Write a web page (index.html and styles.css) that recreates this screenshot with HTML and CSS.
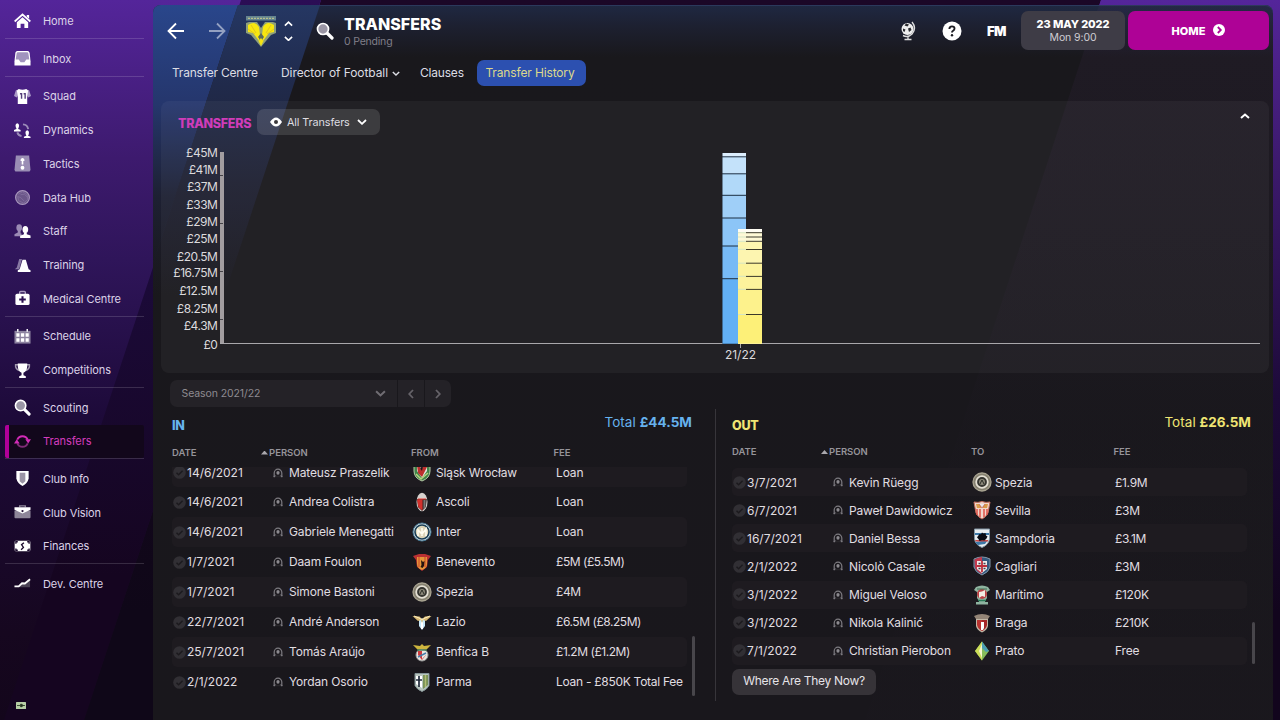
FILE: index.html
```html
<!DOCTYPE html>
<html lang="en">
<head>
<meta charset="utf-8">
<title>Transfers</title>
<link rel="stylesheet" href="styles.css">
</head>
<body>
<svg class="defs" width="0" height="0">
  <symbol id="tick" viewBox="0 0 13 13"><circle cx="6.5" cy="6.5" r="6.3" fill="#312f34"/><path d="M3.5 6.8l2.1 2 4-4" fill="none" stroke="#1c1a1e" stroke-width="1.5"/></symbol>
  <symbol id="person" viewBox="0 0 10 10"><path d="M1.200 9V5a3.800 3.800 0 0 1 7.600 0v4" fill="none" stroke="#7d7b80" stroke-width="1.200"/><ellipse cx="5" cy="4.800" rx="1.600" ry="1.900" fill="#8b898e"/><path d="M.8 9.300l2.700-1.800L5 8l1.500-.5 2.700 1.800z" fill="#28262a"/><path d="M.6 9.300V8l2.400-.8L1.800 9.300zM9.400 9.300V8L7 7.200l1.200 2.100z" fill="#7d7b80"/></symbol>
  <symbol id="glass" viewBox="0 0 18 18"><path d="M11 11l5 5" stroke="#fff" stroke-width="3.200" stroke-linecap="round"/><circle cx="7" cy="7" r="5.500" fill="#9a96a5" stroke="#fff" stroke-width="1.700"/></symbol>
  <symbol id="down" viewBox="0 0 10 6"><path d="M1 1l4 3.800L9 1" fill="none" stroke="currentColor" stroke-width="1.800"/></symbol>
  <symbol id="slask" viewBox="0 0 20 20"><path d="M2 2q8-2 16 0v7q0 7-8 10-8-3-8-10z" fill="#3f8549" stroke="#b8c9a6"/><path d="M5 3h10v6l-5 7-5-7z" fill="#e8e3df"/><path d="M5 3h4l-1 4 4-3 3 1-5 10-4-4z" fill="#bc302d"/><path d="M8 6l3-2-1 5z" fill="#181617"/><path d="M4 12l5 5 7-6" stroke="#b7d37c" stroke-width="1.500" fill="none"/></symbol>
  <symbol id="ascoli" viewBox="0 0 20 20"><ellipse cx="10" cy="10" rx="5.500" ry="9.200" fill="#d6d2ce"/><path d="M5.200 7h9.600l-1 8-3.800 4-4-4z" fill="#3c2422"/><path d="M5 7.500h5.500V18.500l-4-3z" fill="#d2312c"/><path d="M11.500 8h2v7l-2 2z" fill="#777"/><path d="M6 7h8" stroke="#e83d35"/></symbol>
  <symbol id="inter" viewBox="0 0 20 20"><circle cx="10" cy="10" r="9" fill="#dce5e6" stroke="#487b98"/><circle cx="10" cy="10" r="7" fill="#ddd5b8" stroke="#183e57" stroke-width="1.600"/><path d="M6 14V8l4 4 4-5v7M10 6v8" stroke="#fffdf0" stroke-width="1.600" fill="none"/></symbol>
  <symbol id="benevento" viewBox="0 0 20 20"><path d="M1 4l6-2h6l6 2-3 4-1 7-5 4-5-4-1-7z" fill="#ba3032"/><path d="M5 5h10v7q0 4-5 6-5-2-5-6z" fill="#e4963a"/><path d="M7 5v10M13 5v10" stroke="#d0512c" stroke-width="1.200"/><path d="M9 8l2 2 1.500-1-.5 5-1.500 2-2-1 1-2z" fill="#24130f"/></symbol>
  <symbol id="spezia" viewBox="0 0 20 20"><circle cx="10" cy="10" r="9" fill="#858070" stroke="#a9a491" stroke-width="1.300"/><circle cx="10" cy="10" r="5.800" fill="#34342f" stroke="#e4e0d4" stroke-width="1.800"/><circle cx="10" cy="10" r="3" fill="#8c897b"/><path d="M8 12l2-4 2 4" stroke="#292b25" fill="none"/></symbol>
  <symbol id="lazio" viewBox="0 0 20 20"><path d="M7 8l3-2 3 2v6l-3 4-3-4z" fill="#c8e8f7"/><path d="M10 10v7" stroke="#fff" stroke-width="2"/><path d="M.5 4l7 .5L10 7l3-2.500L19.500 4 14 9l-3-1-1 3-1-3-3 1z" fill="#d7b873"/><path d="M2 4l5 2 3 2 3-2 5-2" stroke="#fff0c0" fill="none"/></symbol>
  <symbol id="benfica" viewBox="0 0 20 20"><circle cx="10" cy="13" r="6" fill="#e6e5de" stroke="#999"/><path d="M6 9h8v4l-4 5-4-5z" fill="#ce3a3c"/><path d="M10 9h4v4l-4 4z" fill="#ece9e2"/><path d="M6 15l8-4" stroke="#477caa" stroke-width="1.500"/><path d="M1 3l7 1 2-2 2 2 7-1-5 5-4-1-4 1z" fill="#cfb63e"/><path d="M5 8h10" stroke="#3f7850" stroke-width="1.400"/></symbol>
  <symbol id="parma" viewBox="0 0 20 20"><path d="M3 1.500h14v12q-2 4-7 6-5-2-7-6z" fill="#b7c4bd" stroke="#849496"/><path d="M11 3h5v10l-5 4z" fill="#799157"/><path d="M13.500 3v12" stroke="#b1bd73" stroke-width="1.400"/><path d="M4 4h6v12l-6-4z" fill="#fff"/><path d="M7 4v11M4 8h6" stroke="#202b3b" stroke-width="1.700"/></symbol>
  <symbol id="sevilla" viewBox="0 0 20 20"><path d="M2 2q4 1 8-.5Q14 3 18 2l-2 11q-2 4-6 6-4-2-6-6z" fill="#f1d5cb" stroke="#c46d5c"/><path d="M5 9v6M8 9v8M12 9v8M15 9v6" stroke="#dd5147" stroke-width="1.500"/><path d="M4 4h5v4H5zM11 4h5l-1 4h-4z" fill="#d99b4a"/><path d="M7 4l3 4 3-4" fill="#e8e8ec" stroke="#b83d3c" stroke-width=".6"/></symbol>
  <symbol id="sampdoria" viewBox="0 0 20 20"><path d="M2.500 1h15v10q-1 6-7.500 8.500Q3.500 17 2.500 11z" fill="#e8edf0" stroke="#8296a4"/><path d="M3 5h14v2H3zM3 14l13-2-3 4-7 1z" fill="#3c78a8"/><path d="M3 12h13v1.500H4z" fill="#c84848"/><path d="M10 4.500l1.500 1 2-.5.5 2.500 1.500 1-1 2-2 2-2.500-.3-2.500.8-1-2L5 9.500l1-1.500 1.500-2 1.500.3z" fill="#080b13"/></symbol>
  <symbol id="cagliari" viewBox="0 0 20 20"><path d="M2 3q8-4 16 0v8q-1 5-8 8-7-3-8-8z" fill="#34597e" stroke="#8397a9"/><path d="M2.500 3.500Q7 1 10 1v17q-6-3-7-7z" fill="#c23a4e"/><path d="M5 5h10v8l-5 4-5-4z" fill="#f0e9e7"/><path d="M10 5v11M5 10h10" stroke="#bd2f3c" stroke-width="1.800"/><path d="M6.500 7.500h2M11.500 7.500h2M6.500 12.500h2M11.500 12.500h2" stroke="#424151" stroke-width="1.500"/></symbol>
  <symbol id="maritimo" viewBox="0 0 20 20"><path d="M4 2q6-3 12 0l2 3-3 2v6l-2 3v1h3v2.500H4V17h3v-1l-2-3V7L2 5z" fill="#8fb4a0"/><circle cx="10" cy="9" r="5" fill="#bd4246"/><path d="M7 7q3 0 6-2v7l-3-1-3 2z" fill="#f3ece3"/><path d="M6 15.500h8" stroke="#2b7b57" stroke-width="1.500"/><path d="M5 4h10" stroke="#3d6c51"/></symbol>
  <symbol id="braga" viewBox="0 0 20 20"><path d="M2 3q8-4 16 0l-2 3H4z" fill="#948577"/><path d="M4 6h12v7q-1 4-6 6.500Q5 17 4 13z" fill="#c2b7a6"/><path d="M5 7h5v11q-4-2-5-6z" fill="#b93331"/><path d="M10 7h5v5q-1 4-5 6z" fill="#a52628"/><path d="M9 9h3v6l-1 2H9z" fill="#fff"/></symbol>
  <symbol id="prato" viewBox="0 0 20 20"><path d="M10 .5L17 10l-7 9.500L3 10z" fill="#86bd5a"/><path d="M10 .5v19L3 10z" fill="#cddd58"/><path d="M10 .5L17 10l-3 1-4-4z" fill="#4b9eb3"/><path d="M10 3l-3 7 3 7z" fill="#f7f6cf"/></symbol>
</svg>

<div class="backdrop"><i class="ray ray-dark"></i><i class="ray ray-mid"></i><i class="ray ray-right"></i></div>

<div class="app">
  <nav class="sidebar">
    <a class="item"><svg viewBox="0 0 18 18"><path d="M.7 9L9 1.600 17.300 9" fill="none" stroke="#fff" stroke-width="1.800"/><path d="M13.500 2H16v4l-2.500-2z" fill="#fff"/><path d="M9 4.500l6 5.300V16h-4v-4.500H7V16H3V9.800z" fill="#fff"/></svg>Home</a>
    <hr>
    <a class="item"><svg viewBox="0 0 18 18"><path d="M3.500 1h11q1.500 0 2 2l1 9v4.500H.5V12l1-9q.500-2 2-2" fill="#fff"/><path d="M4 2.500h10q1 0 1.200 1l1 6.500H13l-2 3H7l-2-3H1.800l1-6.500q.200-1 1.200-1" fill="#a193be"/></svg>Inbox</a>
    <hr>
    <a class="item"><svg viewBox="0 0 18 18"><path d="M5 1.500l-3 1L0 8.500l3 1.500 2-3zM13 1.500l3 1 2 6-3 1.500-2-3z" fill="#ab9ac7"/><path d="M5 1q4 1.500 8 0l2 2-1 5v9H4V8L3 3z" fill="#fff"/><path d="M6.300 6H8v5.500M10.200 6h1.600v5.500" fill="none" stroke="#56407c" stroke-width="1.500"/></svg>Squad</a>
    <a class="item"><svg viewBox="0 0 18 18"><path d="M9.500 2.500a6 6 0 0 1 5.500 5M8 15a6 6 0 0 1-4.500-4" fill="none" stroke="#9b8bb8" stroke-width="2"/><ellipse cx="3.500" cy="4" rx="1.900" ry="2.700" fill="#fff"/><path d="M2.500 6h2v1.500l2.500 1V10H0V8.500l2.500-1zM13 13h2v1.500l2.500 1V17h-7v-1.500l2.500-1z" fill="#fff"/><ellipse cx="14" cy="11.500" rx="1.900" ry="2.700" fill="#fff"/></svg>Dynamics</a>
    <a class="item"><svg viewBox="0 0 18 18"><path d="M2 .5h14l1.500 15.500-1 1.500H1.500L.5 16z" fill="#9a8db4"/><path d="M9 4v6M7 5.500h4" stroke="#fff" stroke-width="1.700"/><circle cx="9" cy="4.800" r="1.700" fill="#fff"/><circle cx="9" cy="13.500" r="2" fill="#fff"/></svg>Tactics</a>
    <a class="item"><svg viewBox="0 0 18 18"><circle cx="9" cy="9" r="7.300" fill="#6b5689" stroke="#a997bd" stroke-width="1.200"/><path d="M4.500 5.500L9 3l5 3 .500 5-4 4-5.500-2.500-1-4.500 3 1 4 4M7 6l4-.500 3 3" fill="none" stroke="#8471a0" stroke-width=".8"/></svg>Data Hub</a>
    <a class="item"><svg viewBox="0 0 18 18"><ellipse cx="5.500" cy="5" rx="3" ry="3.700" fill="#9b8bb5"/><path d="M4 8h3v3H8v3H.5v-2L4 10z" fill="#9b8bb5"/><ellipse cx="12" cy="7" rx="3" ry="3.800" fill="#fff"/><path d="M10.500 10h3v2l4 1.300V16h-11v-2.500l4-1.500z" fill="#fff"/></svg>Staff</a>
    <a class="item"><svg viewBox="0 0 18 18"><path d="M5.500 2h3l-3 11H.8L3 11z" fill="#8778a3"/><path d="M9 3h3.500l3 10 2 1v2H4v-2l2-1z" fill="#fff"/></svg>Training</a>
    <a class="item"><svg viewBox="0 0 18 18"><rect x="6" y="1.500" width="6" height="5" rx="1" fill="none" stroke="#a99bc0" stroke-width="1.500"/><rect x="1.500" y="4" width="15" height="12" rx="1.700" fill="#fff"/><path d="M9 6.500v7M5.500 10h7" stroke="#2c1152" stroke-width="2.200"/></svg>Medical Centre</a>
    <hr>
    <a class="item"><svg viewBox="0 0 18 18"><path d="M.5 3h17v13.500H.5z" fill="#8d83a0"/><path d="M4 1v3M14 1v3" stroke="#fff" stroke-width="1.500"/><path d="M2.500 5.500h3.300v3.800H2.500zM7.300 5.500h3.500v3.800H7.300zM12.300 5.500h3.300v3.800h-3.300zM2.500 10.800h3.300v3.800H2.500zM7.300 10.800h3.500v3.800H7.300zM12.300 10.800h3.300v3.800h-3.300z" fill="#fff"/></svg>Schedule</a>
    <a class="item"><svg viewBox="0 0 18 18"><path d="M4.500 3H1.700q-.5 4.500 4 6M13.500 3h2.800q.5 4.500-4 6" fill="none" stroke="#a39aaf" stroke-width="1.600"/><path d="M4 1.500h10v3q0 5-4 7v2.500l2.500 1V17h-7v-2L8 14v-2.500q-4-2-4-7z" fill="#fff"/></svg>Competitions</a>
    <hr>
    <a class="item"><svg><use href="#glass"/></svg>Scouting</a>
    <a class="item active"><svg viewBox="0 0 18 18"><path d="M3.500 7a6 6 0 0 1 11 0" fill="none" stroke="#d32bb8" stroke-width="2"/><path d="M14.500 11a6 6 0 0 1-11 0" fill="none" stroke="#7f2b77" stroke-width="2"/><path d="M12 6.500h6L15 11zM0 11l3-4.500L6 11z" fill="#d32bb8"/></svg>Transfers</a>
    <hr>
    <a class="item"><svg viewBox="0 0 18 18"><path d="M2.500 1h13v8q-1 5-6.500 8-5.500-3-6.500-8z" fill="#fff"/><path d="M6 3h6v9l-3 2.500L6 12z" fill="#9b94a5"/></svg>Club Info</a>
    <a class="item"><svg viewBox="0 0 18 18"><path d="M.5 7h17v7q0 1-1 1h-15q-1 0-1-1z" fill="#8e8699"/><path d="M6 3.500V2h6v1.500" fill="none" stroke="#8e8699" stroke-width="1.500"/><path d="M.5 3.500h17v2.700L9 10 .500 6.200z" fill="#fff"/><circle cx="9" cy="7.500" r="1.200" fill="#28153b"/></svg>Club Vision</a>
    <a class="item"><svg viewBox="0 0 18 18"><rect x=".7" y="3" width="16.600" height="11" rx="1.300" fill="#fff"/><path d="M2 6v-2h2M14 4h2v2M2 11v2h2M14 13h2v-2M10.500 5L8 7l2 3-2.500 2.500" fill="none" stroke="#1b0a2d" stroke-width="1.400"/></svg>Finances</a>
    <hr>
    <a class="item"><svg viewBox="0 0 18 18"><path d="M3 12h3l3-3 3 .500L17 5v8H7z" fill="#4a4254"/><path d="M.5 12H5l3.500-3.200 3 .2L17 4.500" fill="none" stroke="#fff" stroke-width="2"/></svg>Dev. Centre</a>
    <svg class="plug" viewBox="0 0 10 7"><rect width="10" height="7" rx=".5" fill="#b7cfa5"/><path d="M1 3.500h3M4.500 2.300H6l1.200 1.200L6 4.700H4.500zM7 3.500h2" fill="#25331e" stroke="#25331e" stroke-width=".8"/></svg>
  </nav>

  <main class="panel">
    <i class="shine shine-a"></i><i class="shine shine-b"></i><i class="shine shine-c"></i>
    <header class="topbar">
      <svg class="arrow" viewBox="0 0 18 18"><path d="M17 9H2M9 1.500L1.500 9 9 16.500" fill="none" stroke="#fff" stroke-width="1.800"/></svg>
      <svg class="arrow next" viewBox="0 0 18 18"><path d="M1 9h15M9 1.500L16.500 9 9 16.500" fill="none" stroke="#fff" stroke-width="1.800"/></svg>
      <svg class="club" viewBox="0 0 30 31"><path d="M0 0h30v4.500H0z" fill="#66858f"/><path d="M2 2.300h26" stroke="#b9c08b" stroke-width="1.300" stroke-dasharray="2 1"/><path d="M0 7l3-1 8 0 4 6 4-6 8 0 3 1v10l-5 2-10 12L5 19l-5-2z" fill="#8fa07a"/><path d="M2 9q7-5 11 2l1 8-1 6-6-8-5-1zM28 9q-7-5-11 2l-1 8 1 6 6-8 5-1z" fill="#f7e70f"/><path d="M2 13l7 5M28 13l-7 5M5 9l5 8M25 9l-5 8" stroke="#d8b528" stroke-width=".7"/><path d="M15 17l3 4-3 4-3-4z" fill="#5b6a5c"/><path d="M12.500 25l2.500-3 2.500 3-2.500 5z" fill="#f4e313"/></svg>
      <div class="spin"><svg viewBox="0 0 10 6"><path d="M1 5l4-3.800L9 5" fill="none" stroke="#fff" stroke-width="1.800"/></svg><svg viewBox="0 0 10 6"><path d="M1 1l4 3.800L9 1" fill="none" stroke="#fff" stroke-width="1.800"/></svg></div>
      <svg class="find"><use href="#glass"/></svg>
      <div class="title"><h1>TRANSFERS</h1><p>0 Pending</p></div>
      <svg class="globe" viewBox="0 0 18 20"><circle cx="8.500" cy="8" r="6" fill="#eee"/><path d="M13 1q5 6 0 12-4 4-9 1.500M9 15v3M5.500 18.500h7" fill="none" stroke="#ddd" stroke-width="1.400"/><path d="M7 2.500l3 1-1.500 2-3-1zM4 7.500l2.500 1-1 2.500-1.500-1zM9 7.500l2.500-1 1 2.500-2.500 2z" fill="#2a2b30"/></svg>
      <svg class="help" viewBox="0 0 20 20"><circle cx="10" cy="10" r="9.500" fill="#fff"/><path d="M7.400 8q0-2.600 2.600-2.600t2.500 2.200q0 1.300-1.400 2.100-1.100.6-1.100 1.900" fill="none" stroke="#1b1b22" stroke-width="1.900"/><circle cx="10" cy="14.200" r="1.200" fill="#1b1b22"/></svg>
      <b class="fm">FM</b>
      <div class="date"><b>23 MAY 2022</b><span>Mon 9:00</span></div>
      <div class="home"><b>HOME</b><svg viewBox="0 0 12 12"><circle cx="6" cy="6" r="6" fill="#fff"/><path d="M4.800 3l3 3-3 3" fill="none" stroke="#ae0296" stroke-width="1.800"/></svg></div>
    </header>

    <nav class="tabs">
      <a class="t1">Transfer Centre</a><a class="t2">Director of Football<svg><use href="#down"/></svg></a><a class="t3">Clauses</a><a class="t4">Transfer History</a>
    </nav>

    <section class="card">
      <div class="card-head"><h2>TRANSFERS</h2><div class="filter"><svg class="eye" viewBox="0 0 12 10"><path d="M0 5q6-9 12 0-6 9-12 0" fill="#fff"/><circle cx="6" cy="5" r="2" fill="#3b393d"/></svg><span>All Transfers</span><svg class="chev"><use href="#down"/></svg></div><svg class="collapse" viewBox="0 0 10 6"><path d="M1 5l4-3.500L9 5" fill="none" stroke="#fff" stroke-width="2"/></svg></div>
      <svg class="chart" viewBox="161 136 1108 237">
        <g class="ylab" text-anchor="end"><text x="217.500" y="157">£45M</text><text x="217.500" y="174">£41M</text><text x="217.500" y="191">£37M</text><text x="217.500" y="208.500">£33M</text><text x="217.500" y="225.700">£29M</text><text x="217.500" y="242.500">£25M</text><text x="217.500" y="260.500">£20.5M</text><text x="217.500" y="277.200">£16.75M</text><text x="217.500" y="295.200">£12.5M</text><text x="217.500" y="312.800">£8.25M</text><text x="217.500" y="330">£4.3M</text><text x="217.500" y="348.500">£0</text></g>
        <rect x="220" y="152" width="4" height="192" fill="#a29da0"/><path d="M220 175.500h3M220 223.500h3M220 271.500h3M220 319.500h3" stroke="#444247"/>
        <path d="M220 343.500h1040M740.500 343v5" stroke="#a9a7ab" fill="none"/>
        <g fill="#1c2f42"><rect x="722.500" y="153" width="23.500" height="191"/></g>
        <rect x="722.500" y="153" width="23.500" height="3.300" fill="#dceefd"/><rect x="722.500" y="157.300" width="23.500" height="16" fill="#c4e2fa"/><rect x="722.500" y="174.300" width="23.500" height="20.500" fill="#b1d9f9"/><rect x="722.500" y="195.800" width="23.500" height="21.700" fill="#9fcff8"/><rect x="722.500" y="218.500" width="23.500" height="27" fill="#8cc5f7"/><rect x="722.500" y="246.500" width="23.500" height="31.700" fill="#77baf6"/><rect x="722.500" y="279.200" width="23.500" height="64.500" fill="#62b0f5"/>
        <rect x="738" y="229" width="24" height="115" fill="#fef9d6"/><rect x="738" y="242" width="24" height="22" fill="#fdf5b0"/><rect x="738" y="263" width="24" height="27" fill="#fdf39c"/><rect x="738" y="289" width="24" height="25" fill="#fdf28c"/><rect x="738" y="314" width="24" height="29.700" fill="#fdf078"/><rect x="738" y="229" width="24" height="3.500" fill="#fffdf4"/>
        <path d="M738 232.700h8M738 237h8M738 241.300h8M738 249.300h8M738 263.200h8M738 276.300h8M738 289.300h8M738 314.500h8" stroke="#d5e5c4"/>
        <path d="M746 232.700h16M746 237h16M746 241.300h16M746 249.500h16M746 263.200h16M746 276.400h16M746 289.400h16M746 314.500h16" stroke="#3b382a"/>
        <text class="xlab" x="740.500" y="359" text-anchor="middle">21/22</text>
      </svg>
    </section>

    <div class="season"><div class="select">Season 2021/22<svg><use href="#down"/></svg></div><div class="step prev"><svg><use href="#down"/></svg></div><div class="step fwd"><svg><use href="#down"/></svg></div></div>

    <div class="lists">
      <section class="list in">
        <div class="list-head"><h3>IN</h3><p>Total <b>£44.5M</b></p></div>
        <div class="cols"><span>DATE</span><i></i><span>PERSON</span><span>FROM</span><span>FEE</span></div>
        <div class="scroll"><div class="rows">
          <div class="row"><svg class="tk"><use href="#tick"/></svg><span class="d">14/6/2021</span><svg class="pn"><use href="#person"/></svg><span>Mateusz Praszelik</span><svg class="cr"><use href="#slask"/></svg><span>Śląsk Wrocław</span><span>Loan</span></div>
          <div class="row"><svg class="tk"><use href="#tick"/></svg><span class="d">14/6/2021</span><svg class="pn"><use href="#person"/></svg><span>Andrea Colistra</span><svg class="cr"><use href="#ascoli"/></svg><span>Ascoli</span><span>Loan</span></div>
          <div class="row"><svg class="tk"><use href="#tick"/></svg><span class="d">14/6/2021</span><svg class="pn"><use href="#person"/></svg><span>Gabriele Menegatti</span><svg class="cr"><use href="#inter"/></svg><span>Inter</span><span>Loan</span></div>
          <div class="row"><svg class="tk"><use href="#tick"/></svg><span class="d">1/7/2021</span><svg class="pn"><use href="#person"/></svg><span>Daam Foulon</span><svg class="cr"><use href="#benevento"/></svg><span>Benevento</span><span class="money">£5M (£5.5M)</span></div>
          <div class="row"><svg class="tk"><use href="#tick"/></svg><span class="d">1/7/2021</span><svg class="pn"><use href="#person"/></svg><span>Simone Bastoni</span><svg class="cr"><use href="#spezia"/></svg><span>Spezia</span><span class="money">£4M</span></div>
          <div class="row"><svg class="tk"><use href="#tick"/></svg><span class="d">22/7/2021</span><svg class="pn"><use href="#person"/></svg><span>André Anderson</span><svg class="cr"><use href="#lazio"/></svg><span>Lazio</span><span class="money">£6.5M (£8.25M)</span></div>
          <div class="row"><svg class="tk"><use href="#tick"/></svg><span class="d">25/7/2021</span><svg class="pn"><use href="#person"/></svg><span>Tomás Araújo</span><svg class="cr"><use href="#benfica"/></svg><span>Benfica B</span><span class="money">£1.2M (£1.2M)</span></div>
          <div class="row"><svg class="tk"><use href="#tick"/></svg><span class="d">2/1/2022</span><svg class="pn"><use href="#person"/></svg><span>Yordan Osorio</span><svg class="cr"><use href="#parma"/></svg><span>Parma</span><span class="terms">Loan - £850K Total Fee</span></div>
        </div><i class="thumb"></i></div>
      </section>
      <section class="list out">
        <div class="list-head"><h3>OUT</h3><p>Total <b>£26.5M</b></p></div>
        <div class="cols"><span>DATE</span><i></i><span>PERSON</span><span>TO</span><span>FEE</span></div>
        <div class="scroll"><div class="rows">
          <div class="row"><svg class="tk"><use href="#tick"/></svg><span class="d">3/7/2021</span><svg class="pn"><use href="#person"/></svg><span>Kevin Rüegg</span><svg class="cr"><use href="#spezia"/></svg><span>Spezia</span><span class="money">£1.9M</span></div>
          <div class="row"><svg class="tk"><use href="#tick"/></svg><span class="d">6/7/2021</span><svg class="pn"><use href="#person"/></svg><span>Paweł Dawidowicz</span><svg class="cr"><use href="#sevilla"/></svg><span>Sevilla</span><span class="money">£3M</span></div>
          <div class="row"><svg class="tk"><use href="#tick"/></svg><span class="d">16/7/2021</span><svg class="pn"><use href="#person"/></svg><span>Daniel Bessa</span><svg class="cr"><use href="#sampdoria"/></svg><span>Sampdoria</span><span class="money">£3.1M</span></div>
          <div class="row"><svg class="tk"><use href="#tick"/></svg><span class="d">2/1/2022</span><svg class="pn"><use href="#person"/></svg><span>Nicolò Casale</span><svg class="cr"><use href="#cagliari"/></svg><span>Cagliari</span><span class="money">£3M</span></div>
          <div class="row"><svg class="tk"><use href="#tick"/></svg><span class="d">3/1/2022</span><svg class="pn"><use href="#person"/></svg><span>Miguel Veloso</span><svg class="cr"><use href="#maritimo"/></svg><span>Marítimo</span><span class="money">£120K</span></div>
          <div class="row"><svg class="tk"><use href="#tick"/></svg><span class="d">3/1/2022</span><svg class="pn"><use href="#person"/></svg><span>Nikola Kalinić</span><svg class="cr"><use href="#braga"/></svg><span>Braga</span><span class="money">£210K</span></div>
          <div class="row"><svg class="tk"><use href="#tick"/></svg><span class="d">7/1/2022</span><svg class="pn"><use href="#person"/></svg><span>Christian Pierobon</span><svg class="cr"><use href="#prato"/></svg><span>Prato</span><span>Free</span></div>
        </div><i class="thumb"></i></div>
        <div class="where">Where Are They Now?</div>
      </section>
    </div>
  </main>
</div>
</body>
</html>
```
FILE: styles.css
```css
* { box-sizing: border-box; margin: 0; padding: 0; }
body { width: 1280px; height: 720px; overflow: hidden; position: relative; background: #12041e; font-family: Inter, "Liberation Sans", sans-serif; color: #e6e4e8; }
svg { display: block; flex: none; }
.defs { position: absolute; }
h1, h2, h3, p { white-space: nowrap; }

.backdrop { position: absolute; inset: 0; background: linear-gradient(#54259a, #3d1a6e 22%, #2f155a 36%, #1d0a39 58%, #16071f 88%, #13061b); }
.ray { position: absolute; inset: 0; }
.ray-mid { background: linear-gradient(#2b0d55 0, #1b0a38 40%, #150520 80%); clip-path: polygon(241px 0, 321px 0, 84px 720px, 4px 720px); }
.ray-dark { background: linear-gradient(#1b0727, #16081f 40%, #0f0718 85%); clip-path: polygon(321px 0, 1101px 0, 864px 720px, 84px 720px); }
.ray-right { background: linear-gradient(#54259a, #3d1a6e 22%, #1d0a39 55%, #12051d 85%); clip-path: polygon(1101px 0, 1280px 0, 1280px 720px, 864px 720px); }

.app { position: relative; display: flex; height: 720px; }
.sidebar { width: 153px; padding: 4.600px 9px 0 5px; font-size: 11px; letter-spacing: -.08px; color: #dcd3e8; }
.item { display: flex; align-items: center; height: 33.750px; padding-left: 9px; gap: 12px; border-radius: 2px; }
.item svg { width: 17px; height: 17px; }
.sidebar hr { height: 3.750px; border: 0; border-top: 1px solid rgba(255,255,255,.15); }
.item.active { background: linear-gradient(90deg, #b0009a 0, #b0009a 4px, #12071b 4px); color: #d43cbe; }
.plug { width: 10px; height: 7px; margin: 101px 0 0 11px; }

.panel { position: relative; width: 1120px; height: 715px; margin-top: 5px; border-radius: 8px 8px 0 0; background: linear-gradient(#1f2842 0, #1d2030 22px, #19181c 52px, #19171c 100%); box-shadow: inset 0 1px #2b395c; overflow: hidden; padding: 5px 4px 0 8px; }
.shine { position: absolute; inset: 0; }
.shine-a { background: linear-gradient(#29468b, #25366c 100px, rgba(32,38,66,.6) 190px, rgba(27,26,30,0) 280px); clip-path: polygon(0 0, 85px 0, -20px 320px); }
.shine-b { background: linear-gradient(#253763, #202a4b 80px, rgba(32,35,58,.7) 180px, rgba(27,26,30,0) 290px); clip-path: polygon(85px 0, 167px 0, 0 507px, 0 258px); }
.shine-c { background: linear-gradient(rgba(80,50,100,.12), rgba(80,50,100,.08) 200px, rgba(80,50,100,.01) 420px); clip-path: polygon(946px 0, 1120px 0, 1120px 715px, 712px 715px); }
.topbar, .tabs, .card, .season, .lists { position: relative; }

.topbar { display: flex; align-items: center; height: 40px; padding-left: 6px; }
.arrow { width: 18px; height: 18px; margin-top: 2px; }
.arrow.next { margin-left: 23px; opacity: .5; }
.club { width: 30px; height: 31px; margin-left: 20px; margin-top: 2px; }
.spin { display: grid; gap: 9px; margin: 2px 0 0 8px; }
.spin svg { width: 9px; height: 5.500px; }
.find { width: 18px; height: 18px; margin: 1px 0 0 23px; }
.title { width: 555px; margin-left: 10px; }
h1 { font-size: 16px; font-weight: 800; line-height: 18px; letter-spacing: .05px; color: #fff; margin-top: 5px; }
.title p { font-size: 10.500px; line-height: 17px; letter-spacing: -.2px; color: #807f89; }
.globe { width: 18px; height: 20px; margin-top: 2px; }
.help { width: 20px; height: 20px; margin: 2px 0 0 25px; }
.fm { width: 36px; margin: 2px 0 0 25px; font-size: 13px; font-weight: 900; letter-spacing: -.5px; color: #fff; }
.date, .home { height: 39px; border-radius: 7px; }
.date { margin-left: -2px; width: 104px; background: #3e3c46; text-align: center; display: grid; align-content: center; line-height: 13.500px; padding-top: 2px; font-size: 10.500px; letter-spacing: -.1px; color: #cfcdd3; }
.date b { font-size: 11px; font-weight: 800; letter-spacing: -.1px; color: #fff; }
.home { display: flex; align-items: center; justify-content: center; gap: 8px; width: 141px; margin-left: 3px; background: #ae0296; font-size: 11px; color: #fff; }
.home svg { width: 12px; height: 12px; }
.home b { font-weight: 800; padding-top: 1px; }

.tabs { display: flex; align-items: center; height: 26px; margin-top: 10px; padding-left: 11px; font-size: 12px; color: #dcdde4; white-space: nowrap; }
.tabs a { display: flex; align-items: center; padding-bottom: 2px; letter-spacing: -.2px; }
.t1 { width: 109px; }
.tabs .t2 { width: 139px; gap: 4px; letter-spacing: -.08px; }
.t2 svg { width: 8px; height: 5px; margin-top: 2px; }
.t3 { width: 57px; }
.tabs .t4 { width: 109px; height: 26px; padding-right: 3px; justify-content: center; border-radius: 7px; background: #2c50b0; color: #dcd88c; letter-spacing: -.14px; }

.card { height: 272px; margin-top: 15px; border-radius: 8px; background: rgba(255,255,255,.045); }
.card-head { display: flex; align-items: center; height: 35px; padding: 7px 19px 0 17px; }
h2 { width: 79px; padding-top: 2px; font-size: 12.500px; font-weight: 800; letter-spacing: -.28px; color: #cf3cb9; }
.filter { display: flex; align-items: center; width: 123px; height: 26px; border-radius: 7px; background: rgba(255,255,255,.12); padding-left: 13px; font-size: 10.800px; color: #dedce0; }
.eye { width: 12px; height: 10px; margin-right: 5px; }
.filter span { width: 70px; letter-spacing: -.1px; white-space: nowrap; }
.chev { width: 10px; height: 6px; color: #fff; }
.collapse { width: 10px; height: 6px; margin-left: auto; margin-top: -12px; }
.chart { width: 1108px; height: 237px; margin-top: 0; }
.ylab text, .xlab { font-size: 12px; letter-spacing: -.45px; fill: #dcdadd; }
.chart .xlab { letter-spacing: 0; }

.season { display: flex; gap: 1px; margin: 7px 0 0 9px; height: 27px; font-size: 10.500px; letter-spacing: -.1px; color: #8e8b91; }
.select { display: flex; align-items: center; justify-content: space-between; width: 227px; padding: 0 11px 0 11.500px; background: #242227; border-radius: 7px 0 0 7px; }
.select svg { width: 11px; height: 7px; color: #706d73; }
.step { display: grid; place-items: center; width: 26px; background: #242227; color: #666369; }
.step svg { width: 10px; height: 6px; transform: rotate(90deg); }
.fwd { border-radius: 0 7px 7px 0; }
.fwd svg { transform: rotate(-90deg); }

.lists { display: flex; padding-left: 11px; margin-top: 2px; }
.list { height: 292px; width: 544px; }
.in { border-right: 1px solid #37353a; }
.out { padding-left: 16px; }
.list-head { display: flex; justify-content: space-between; height: 30px; line-height: 27px; font-size: 13.500px; letter-spacing: .05px; }
.in .list-head { width: 520px; color: #66b2ee; }
.out .list-head { width: 519px; color: #f0e573; }
h3 { font-size: 12.500px; font-weight: 800; padding-top: 3px; letter-spacing: -.2px; }
.list-head b { font-weight: 700; }
.cols { display: grid; grid-template-columns: 89px 8px 142px 142.500px 1fr; height: 26px; line-height: 27px; font-size: 9.500px; font-weight: 600; color: #96949a; }
.cols i { align-self: center; width: 7px; height: 4px; background: #aaa8ad; clip-path: polygon(0 100%, 50% 0, 100% 100%); }
.out .cols { line-height: 25px; }
.scroll { position: relative; overflow: hidden; height: 230px; margin-top: 2px; width: 525px; }
.rows { width: 515px; }
.out .scroll { height: 197px; margin-top: 3px; }
.row { display: grid; grid-template-columns: 15px 86px 16px 123px 24px 120px 1fr; align-items: center; height: 30px; font-size: 12px; letter-spacing: -.15px; color: #e0dee1; white-space: nowrap; border-radius: 5px; }
.in .row span { padding-bottom: 1px; }
.row .d { letter-spacing: 0; }
/* the list is scrolled: its first row is partly above the edge */
.in .row:first-child { height: 20px; align-items: start; border-radius: 0 0 5px 5px; }
.in .row:first-child span { line-height: 11px; padding: 0; }
.in .row:first-child .tk { margin-top: -1px; }
.in .row:first-child .pn { margin-top: 1px; }
.in .row:first-child .cr { margin-top: -5px; }
.out .row { height: 28.150px; grid-template-columns: 15px 86px 16px 123px 23px 120px 1fr; }
.row:nth-child(odd) { background: #1e1b20; }
.tk { width: 13px; height: 13px; margin-left: 1px; }
.pn { width: 10px; height: 10px; }
.cr { width: 20px; height: 20px; }
.row .money { letter-spacing: -.45px; }
.out .row .money { letter-spacing: -.3px; }
.row .terms { letter-spacing: -.28px; }
.thumb { position: absolute; right: 2px; bottom: 1px; width: 3.500px; height: 60px; border-radius: 2px; background: #48464b; }
.out .thumb { height: 42px; }
.where { width: 144px; height: 26px; margin-top: 4px; line-height: 23px; text-align: center; border-radius: 7px; background: #363338; font-size: 12px; letter-spacing: -.3px; }
```
